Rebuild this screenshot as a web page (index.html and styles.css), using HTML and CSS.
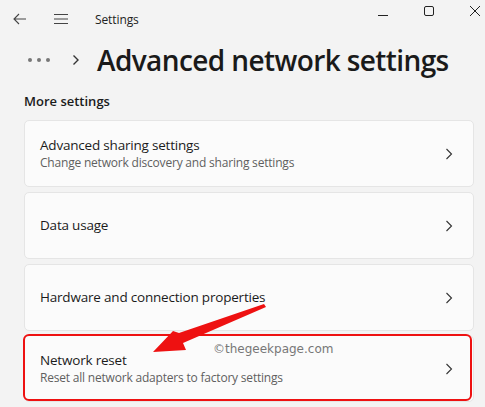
FILE: index.html
```html
<!DOCTYPE html>
<html>
<head>
<meta charset="utf-8">
<link rel="stylesheet" href="styles.css">
</head>
<body>
<div class="window">
  <div class="titlebar">
    <div class="tb-left">
      <svg class="ico back" width="14" height="12" viewBox="0 0 14 12"><path d="M6 1 L1 6 L6 11 M1 6 H13" fill="none" stroke="#444" stroke-width="1.1"/></svg>
      <svg class="ico menu" width="16" height="12" viewBox="0 0 16 12"><path d="M1 1.5 H15 M1 6 H15 M1 10.5 H15" fill="none" stroke="#444" stroke-width="1.1"/></svg>
      <span class="app">Settings</span>
    </div>
    <div class="tb-right">
      <svg width="12" height="12" viewBox="0 0 12 12"><path d="M1 10.5 H11" stroke="#222" stroke-width="1"/></svg>
      <svg width="12" height="12" viewBox="0 0 12 12"><rect x="1.5" y="1.5" width="9" height="9" rx="1.5" fill="none" stroke="#222" stroke-width="1"/></svg>
      <svg width="12" height="12" viewBox="0 0 12 12"><path d="M1 1 L11 11 M11 1 L1 11" stroke="#222" stroke-width="1"/></svg>
    </div>
  </div>
  <div class="header">
    <div class="dots"><span></span><span></span><span></span></div>
    <svg class="crumb" width="8" height="12" viewBox="0 0 8 12"><path d="M1.5 1.5 L6 6 L1.5 10.5" fill="none" stroke="#333" stroke-width="1.4"/></svg>
    <h1>Advanced network settings</h1>
  </div>
  <div class="section">More settings</div>
  <div class="list">
    <div class="card">
      <div class="txt">
        <div class="t">Advanced sharing settings</div>
        <div class="s">Change network discovery and sharing settings</div>
      </div>
      <svg class="chev" width="8" height="12" viewBox="0 0 8 12"><path d="M1.5 1 L6.5 6 L1.5 11" fill="none" stroke="#333" stroke-width="1.1"/></svg>
    </div>
    <div class="card">
      <div class="txt"><div class="t">Data usage</div></div>
      <svg class="chev" width="8" height="12" viewBox="0 0 8 12"><path d="M1.5 1 L6.5 6 L1.5 11" fill="none" stroke="#333" stroke-width="1.1"/></svg>
    </div>
    <div class="card">
      <div class="txt"><div class="t">Hardware and connection properties</div></div>
      <svg class="chev" width="8" height="12" viewBox="0 0 8 12"><path d="M1.5 1 L6.5 6 L1.5 11" fill="none" stroke="#333" stroke-width="1.1"/></svg>
    </div>
    <div class="card highlight">
      <div class="txt">
        <div class="t">Network reset</div>
        <div class="s">Reset all network adapters to factory settings</div>
      </div>
      <svg class="chev" width="8" height="12" viewBox="0 0 8 12"><path d="M1.5 1 L6.5 6 L1.5 11" fill="none" stroke="#333" stroke-width="1.1"/></svg>
      <span class="watermark">©thegeekpage.com</span>
      <div class="redbox"></div>
    </div>
  </div>
  <svg class="arrow" width="485" height="407" viewBox="0 0 485 407">
    <path d="M264 304 L179 333 L173 331 L153 352 L186 350 L183 343 L266 307 Z" fill="#ee1111"/>
  </svg>
</div>
</body>
</html>
```
FILE: styles.css
```css
* { box-sizing: border-box; }
html, body { margin: 0; padding: 0; }
body {
  background: #f3f3f3;
  font-family: "Open Sans", "Noto Sans", sans-serif;
  color: #1b1b1b;
  width: 485px;
  height: 407px;
  overflow: hidden;
}
.window { position: relative; width: 485px; height: 407px; }
.titlebar {
  height: 38px;
  display: flex;
  justify-content: space-between;
  align-items: flex-start;
}
.tb-left {
  display: flex;
  align-items: center;
  height: 38px;
  padding-left: 13px;
}
.back { margin-right: 26px; }
.menu { margin-right: 26px; }
.app { font-size: 12px; color: #222; letter-spacing: -0.1px; }
.tb-right {
  display: flex;
  gap: 34px;
  padding-top: 5px;
  padding-right: 4px;
}
.tb-right svg { display: block; }
.header {
  display: flex;
  align-items: center;
  height: 44px;
  padding-left: 28px;
}
.dots { display: flex; gap: 5px; margin-right: 22px; }
.dots span { width: 4px; height: 4px; border-radius: 50%; background: #777; display: block; }
.crumb { margin-right: 17px; }
h1 {
  margin: 0;
  font-size: 28px;
  font-weight: 600;
  color: #1a1a1a;
  letter-spacing: -0.6px;
  line-height: 40px;
}
.section {
  padding-left: 24px;
  margin-top: 10px;
  font-size: 13px;
  font-weight: 600;
  color: #1b1b1b;
  height: 28px;
}
.list {
  display: flex;
  flex-direction: column;
  gap: 5px;
  padding-left: 24px;
  padding-right: 11px;
}
.card {
  position: relative;
  height: 67px;
  background: #fbfbfb;
  border: 1px solid #e5e5e5;
  border-radius: 5px;
  display: flex;
  align-items: center;
  justify-content: space-between;
  padding: 0 20px 0 15px;
}
.card.highlight { height: 67px; margin-top: -1px; }
.t { font-size: 13.5px; color: #1b1b1b; line-height: 19px; letter-spacing: -0.2px; }
.s { font-size: 12px; color: #5f5f5f; line-height: 16px; letter-spacing: -0.2px; }
.chev { display: block; }
.watermark {
  position: absolute;
  left: 188px;
  top: 6px;
  color: #777;
  font-family: "DejaVu Sans", sans-serif;
  font-size: 12px;
}
.redbox {
  position: absolute;
  left: -2px;
  top: -2px;
  width: 449px;
  height: 67px;
  border: 2px solid #ee1111;
  border-radius: 6px;
}
.arrow { position: absolute; left: 0; top: 0; pointer-events: none; }
```
